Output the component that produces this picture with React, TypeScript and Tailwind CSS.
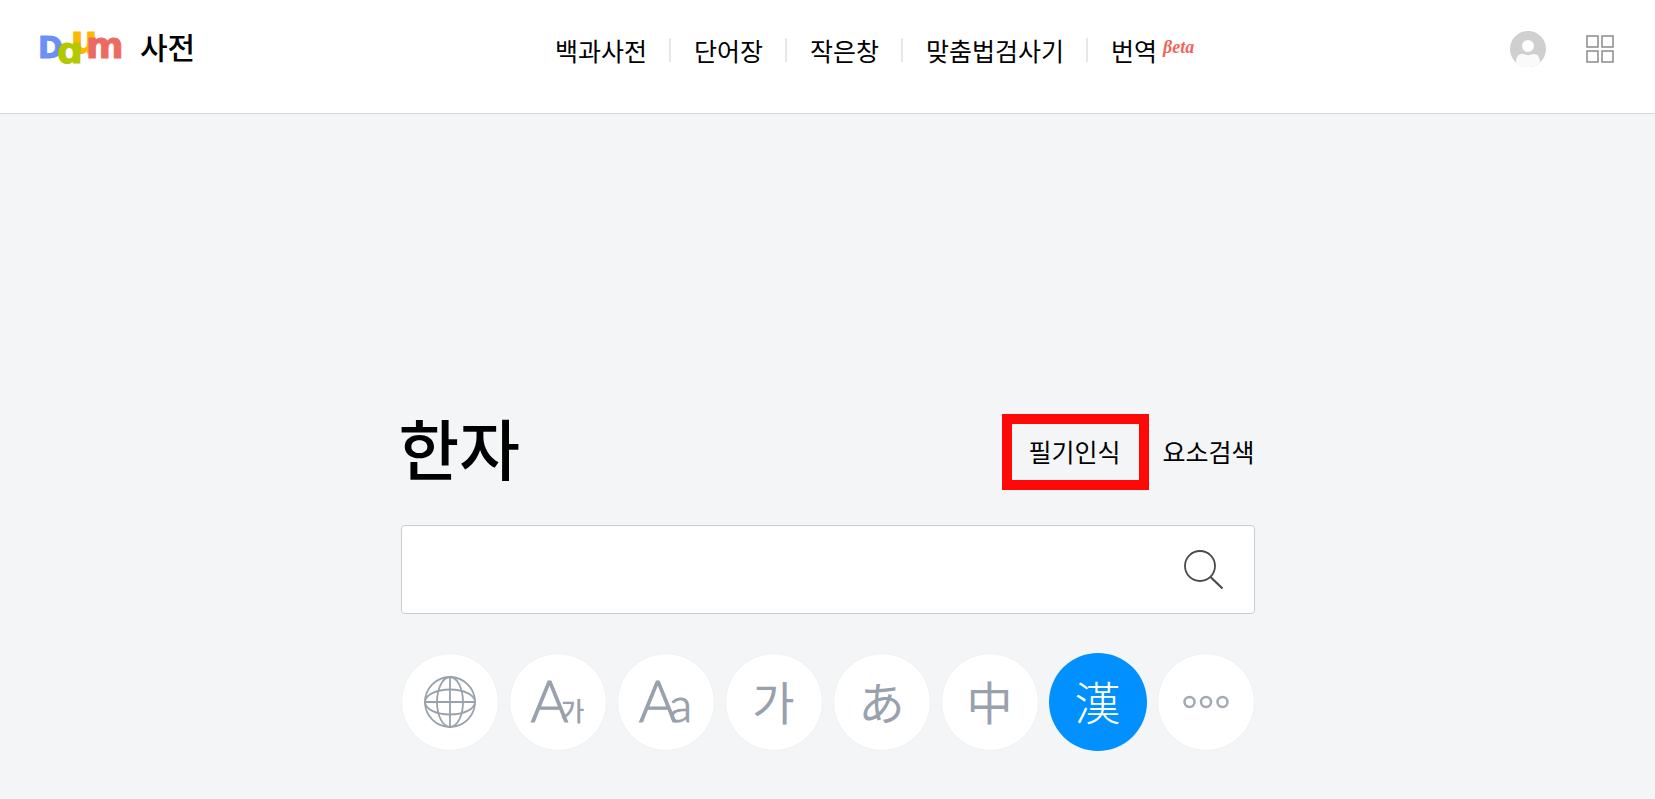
import type { ReactNode } from 'react';
import clsx from 'clsx';

const NAV_ITEMS = ['백과사전', '단어장', '작은창', '맞춤법검사기', '번역'];

interface Dictionary {
  id: string;
  label: string;
  icon: ReactNode;
  active?: boolean;
}

function DaumLogo() {
  return (
    <svg
      width="84"
      height="36"
      viewBox="0 0 84 36"
      role="img"
      aria-label="Daum"
      className="overflow-visible font-['DejaVu_Sans'] font-bold"
      strokeLinejoin="round"
      strokeWidth="1"
    >
      <text x="31" y="23" fontSize="37" fill="#ffb800" stroke="#ffb800">u</text>
      <text x="-2" y="28" fontSize="30" fill="#6b8ff8" stroke="#6b8ff8">D</text>
      <text x="46" y="28" fontSize="36" fill="#ec6a60" stroke="#ec6a60">m</text>
      <text x="17" y="33" fontSize="36" fill="#b4c800" stroke="#b4c800">ɑ</text>
    </svg>
  );
}

function UserIcon() {
  return (
    <svg width="36" height="36" viewBox="0 0 36 36">
      <circle cx="18" cy="18" r="18" fill="#cfcfcf" />
      <circle cx="18" cy="15" r="6" fill="#fff" />
      <path d="M6 31.500c0-6 2.500-8.500 6.500-8.500 1.500 0 3 1.200 5.500 1.200s4-1.200 5.500-1.200c4 0 6.500 2.500 6.500 8.500A18 18 0 0 1 6 31.500z" fill="#fafafa" />
    </svg>
  );
}

function GridIcon() {
  return (
    <svg width="28" height="28" viewBox="0 0 28 28" fill="none" stroke="#8a8a8e" strokeWidth="1.500">
      <rect x="1" y="1" width="11" height="11" />
      <rect x="16" y="1" width="11" height="11" />
      <rect x="1" y="16" width="11" height="11" />
      <rect x="16" y="16" width="11" height="11" />
    </svg>
  );
}

function SearchIcon() {
  return (
    <svg width="40" height="40" viewBox="0 0 40 40" fill="none" stroke="#4a4a4a">
      <circle cx="16" cy="16" r="15" strokeWidth="1.800" />
      <path d="M26.500 27 38.500 38.500" strokeWidth="2.200" />
    </svg>
  );
}

function GlobeIcon() {
  return (
    <svg width="52" height="52" viewBox="0 0 52 52" fill="none" stroke="#98a1ad" strokeWidth="1.800">
      <circle cx="26" cy="26" r="25" />
      <ellipse cx="26" cy="26" rx="13" ry="25" />
      <ellipse cx="26" cy="26" rx="25" ry="12.500" />
      <path d="M26 1v50M1 26h50" />
    </svg>
  );
}

function MoreIcon() {
  return (
    <svg width="46" height="14" viewBox="0 0 46 14" fill="none" stroke="#a3a9b2" strokeWidth="2.500">
      <circle cx="6.500" cy="7" r="5" />
      <circle cx="23" cy="7" r="5" />
      <circle cx="39.500" cy="7" r="5" />
    </svg>
  );
}

function Glyph({ children }: { children: ReactNode }) {
  return <span className="pb-1">{children}</span>;
}

const DICTIONARIES: Dictionary[] = [
  { id: 'all', label: '전체', icon: <GlobeIcon /> },
  {
    id: 'english',
    label: '영어',
    icon: (
      <span className="flex items-end pb-1">
        <span className="font-['Lato'] text-[58px] leading-none font-light [-webkit-text-stroke:1px_#98a1ad]">A</span>
        <span className="-ml-2 pb-1.5 text-[26px] leading-none font-medium">가</span>
      </span>
    ),
  },
  {
    id: 'english-english',
    label: '영영',
    icon: (
      <span className="flex items-baseline pb-1 font-['Lato'] font-light [-webkit-text-stroke:1px_#98a1ad]">
        <span className="text-[58px] leading-none">A</span>
        <span className="-ml-2 text-[48px] leading-none">a</span>
      </span>
    ),
  },
  { id: 'korean', label: '한국어', icon: <Glyph>가</Glyph> },
  { id: 'japanese', label: '일본어', icon: <Glyph>あ</Glyph> },
  { id: 'chinese', label: '중국어', icon: <Glyph>中</Glyph> },
  { id: 'hanja', label: '한자', icon: <Glyph>漢</Glyph>, active: true },
  { id: 'more', label: '더보기', icon: <MoreIcon /> },
];

function Header() {
  return (
    <header className="flex h-[114px] items-start justify-between border-b border-[#d5d7db] bg-white pr-[41px] pl-10">
      <a href="#" className="mt-[30px] flex h-9 items-center gap-4">
        <DaumLogo />
        <span className="pb-1 text-[30px] leading-9 font-medium">사전</span>
      </a>

      <nav className="mt-[30px] pl-11">
        <ul className="flex items-center">
          {NAV_ITEMS.map((item, index) => (
            <li key={item} className="flex items-center">
              {index > 0 && <span className="mr-[23px] ml-[22px] h-6 w-0.5 bg-[#e6e7ea]" />}
              <a href="#" className="text-[25px] leading-10">{item}</a>
            </li>
          ))}
          <li className="mb-1.5 ml-1.5 font-['Liberation_Serif'] text-lg leading-6 font-bold text-[#f2645a] italic">
            βeta
          </li>
        </ul>
      </nav>

      <div className="mt-[31px] flex items-center gap-10">
        <button type="button" aria-label="내 정보"><UserIcon /></button>
        <button type="button" aria-label="서비스 더보기"><GridIcon /></button>
      </div>
    </header>
  );
}

export default function App() {
  return (
    <div className="min-h-screen bg-[#f3f5f7] font-['Noto_Sans_CJK_KR',sans-serif] text-black">
      <Header />

      <main className="mx-auto max-w-[854px] pt-[300px] pb-12">
        <div className="flex h-19 items-center justify-between">
          <h1 className="-ml-0.5 pb-3 text-[66px] leading-16 font-medium">한자</h1>
          <div className="flex gap-[42px] pb-0.5 text-[25px] leading-10">
            <a href="#" className="relative">
              필기인식
              <span className="absolute -top-[17px] -right-[29px] -bottom-[19px] -left-[26px] border-10 border-[#ff0808]" />
            </a>
            <a href="#">요소검색</a>
          </div>
        </div>

        <form
          className="mt-[35px] flex h-[89px] items-center rounded border border-[#c9ccd1] bg-white pr-[30px]"
          onSubmit={(e) => e.preventDefault()}
        >
          <input
            type="text"
            aria-label="검색어"
            className="h-full min-w-0 flex-1 px-6 text-[25px] outline-none"
          />
          <button type="submit" aria-label="검색"><SearchIcon /></button>
        </form>

        <ul className="mt-[39px] flex justify-between">
          {DICTIONARIES.map(({ id, label, icon, active }) => (
            <li key={id}>
              <button
                type="button"
                aria-label={label}
                className={clsx(
                  'flex size-[98px] items-center justify-center rounded-full text-[46px] leading-none',
                  active
                    ? 'bg-[#0090ff] font-light text-white'
                    : 'border border-[#eff1f3] bg-white text-[#98a1ad]'
                )}
              >
                {icon}
              </button>
            </li>
          ))}
        </ul>
      </main>
    </div>
  );
}
